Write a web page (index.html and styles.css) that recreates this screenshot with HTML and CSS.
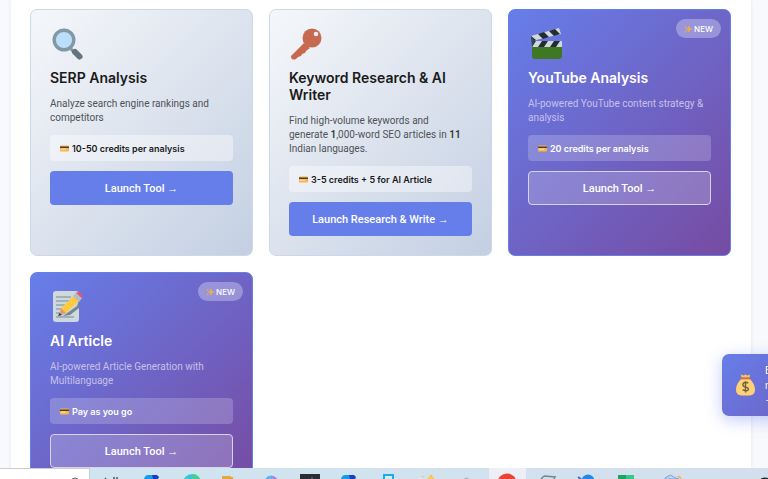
FILE: index.html
```html
<!DOCTYPE html>
<html lang="en">

<head>
    <meta charset="UTF-8">
    <meta name="viewport" content="width=device-width, initial-scale=1.0">
    <title>SEO Tools</title>
    <link rel="stylesheet" href="styles.css">
</head>

<body>
    <svg class="defs" aria-hidden="true">
        <symbol id="card" viewBox="0 0 18 14">
            <rect x="0" y="1" width="18" height="12" rx="1.5" fill="#f5b64c"/>
            <rect x="0" y="3" width="18" height="3" fill="#4b4036"/>
            <rect x="2" y="7.5" width="10" height="2" fill="#fbe0ae"/>
        </symbol>
        <symbol id="sparkles" viewBox="0 0 16 16">
            <path d="M10 2l1.600 4.400L16 8l-4.400 1.600L10 14l-1.600-4.400L4 8l4.400-1.600z" fill="#f3b045" stroke="#f3b045"/>
            <path d="M3 1l.8 2.200L6 4l-2.200.8L3 7l-.8-2.200L0 4l2.200-.8zM3.500 10l.8 2.200 2.200.8-2.200.8-.8 2.200-.8-2.200L.5 13l2.200-.8z" fill="#e8a84f"/>
        </symbol>
    </svg>

    <main class="container">
        <div class="tools-grid">
            <article class="tool-card">
                <svg class="tool-icon" viewBox="0 0 34 34">
                    <path d="M21 20l4 4" stroke="#78909c" stroke-width="3"/>
                    <path d="M25 23l4.500 4.500" stroke="#62747d" stroke-width="6" stroke-linecap="round"/>
                    <circle cx="14" cy="11" r="9.800" fill="#bbdefb" stroke="#8299a5" stroke-width="3.400"/>
                </svg>
                <h3>SERP Analysis</h3>
                <p class="desc">Analyze search engine rankings and competitors</p>
                <div class="credits"><svg><use href="#card"/></svg>10-50 credits per analysis</div>
                <button class="btn">Launch Tool →</button>
            </article>

            <article class="tool-card">
                <svg class="tool-icon" viewBox="0 0 34 34">
                    <path d="M15 14l6 5-4 3-1 2-3 1-1 2-3 1-2 2q-5 2-5-3z" fill="#c6694f"/>
                    <circle cx="23" cy="9" r="9.500" fill="#c6694f"/>
                    <circle cx="27" cy="5" r="2.300" fill="#e9edf4"/>
                </svg>
                <h3>Keyword Research &amp; AI Writer</h3>
                <p class="desc">Find high-volume keywords and generate <b>1</b>,000-word SEO articles in <b>11</b> Indian languages.</p>
                <div class="credits"><svg><use href="#card"/></svg>3-5 credits + 5 for AI Article</div>
                <button class="btn">Launch Research &amp; Write →</button>
            </article>

            <article class="tool-card featured">
                <span class="badge"><svg><use href="#sparkles"/></svg>NEW</span>
                <svg class="tool-icon" viewBox="0 0 34 34">
                    <path d="M4 12h30v7H4z" fill="#cfd8dc"/>
                    <path d="M4 12h4l-4 6zM14 12h6l-4 6h-6zM26 12h6l-4 6h-6z" fill="#252b31"/>
                    <path d="M3 7L31-1l2 6L4 12z" fill="#cfd8dc"/>
                    <path d="M3 7l5 4-4 2zM10 5l6-2 5 5-6 2zM21 2l6-2 5 5-6 2z" fill="#252b31"/>
                    <path d="M3 7l4 5-3 6z" fill="#37474f"/>
                    <path d="M4 18h30v9q0 3-3 3H7q-3 0-3-3z" fill="#3f7825"/>
                </svg>
                <h3>YouTube Analysis</h3>
                <p class="desc">AI-powered YouTube content strategy &amp; analysis</p>
                <div class="credits"><svg><use href="#card"/></svg>20 credits per analysis</div>
                <button class="btn">Launch Tool →</button>
            </article>

            <article class="tool-card featured">
                <span class="badge"><svg><use href="#sparkles"/></svg>NEW</span>
                <svg class="tool-icon" viewBox="0 0 34 34">
                    <rect x="3" y="-1" width="26" height="31" rx="3" fill="#cfd8dc"/>
                    <path d="M6 5h15M6 9h14M6 13h10M6 17h7M6 21h5M6 25h18" stroke="#90a4ae" stroke-width="1.300"/>
                    <path d="M13 24l14-10 2-6v8l-9 7z" fill="#78878e"/>
                    <path d="M11 16L25 3l5 5-14 13-7 3z" fill="#ffca40"/>
                    <path d="M11 16l5 5-7 3z" fill="#d99b83"/>
                    <path d="M9.500 21l2.500 2-4 1z" fill="#30383c"/>
                    <path d="M23 4l3-3 6 5-3 4z" fill="#b0bec5"/>
                    <path d="M26 1q2-2 4 0l2 2q1 1 0 3z" fill="#ee5564"/>
                </svg>
                <h3>AI Article</h3>
                <p class="desc">AI-powered Article Generation with Multilanguage</p>
                <div class="credits"><svg><use href="#card"/></svg>Pay as you go</div>
                <button class="btn">Launch Tool →</button>
            </article>
        </div>
    </main>

    <aside class="toast">
        <svg viewBox="0 0 20 22">
            <path d="M5 0l3 1 2-1 2 1 3-1-1 4H6z" fill="#f5c65d"/>
            <path d="M6 4h8q6 6 6 12 0 6-6 6H6q-6 0-6-6Q0 10 6 4z" fill="#ffd074"/>
            <path d="M5 4h10" stroke="#c86d53" stroke-width="2"/>
            <path d="M13 9q-3-2-5 0t1 4q5 1 4 3t-6 0M10 7v12" stroke="#6b6143" stroke-width="1.500" fill="none"/>
        </svg>
        <p>Earn<br>rewards<br>→</p>
    </aside>

    <footer class="taskbar">
        <div class="search"><svg viewBox="0 0 10 10"><circle cx="5" cy="5" r="4" fill="none" stroke="#666" stroke-width="1"/></svg></div>
        <svg class="apps" viewBox="0 0 679 11" preserveAspectRatio="xMinYMin slice">
            <rect x="399" width="37" height="11" fill="#eceff7"/>
            <path d="M15 11l1-1M24 9v2M27 9v2" stroke="#4b5960" stroke-width="1.500"/>
            <path d="M54 11q1-4 4-4h9v4z" fill="#159bea"/><path d="M62 7h5l2 2-1 2h-5z" fill="#153fc4"/>
            <circle cx="102" cy="15" r="9" fill="#35c5d5"/><path d="M102 6q6 0 8 5h-8z" fill="#45cd96"/>
            <path d="M132 8h9v1h2v2h-11z" fill="#e3a83e"/>
            <circle cx="181" cy="14" r="6.500" fill="#62b2ed"/><path d="M181 8q5 0 6 3h-5z" fill="#a68be6"/>
            <rect x="210" y="6" width="20" height="5" fill="#292e34"/><path d="M221 10h2" stroke="#728089"/>
            <path d="M251 11q1-4 4-4h9v4z" fill="#159bea"/><path d="M259 7h5l2 2-1 2h-5z" fill="#153fc4"/>
            <rect x="294" y="7" width="9" height="7" fill="#d6ecf5" stroke="#18aee2" stroke-width="2"/>
            <path d="M332 8l2 1M338 11l3-4 3 4z" fill="#ffca4b" stroke="#f5c14b"/>
            <path d="M374 11q2-3 5 0z" fill="#a9b4bd"/>
            <circle cx="417" cy="15" r="9.500" fill="#ea4335"/>
            <path d="M454 8l11 1-1 2M451 11l3-3" fill="none" stroke="#78878e" stroke-width="1.500"/>
            <circle cx="498" cy="13" r="6.500" fill="#2388ed"/><path d="M488 9l3 2" stroke="#426fd3" stroke-width="2"/>
            <rect x="528" y="7" width="8" height="4" fill="#1ba366"/><rect x="536" y="7" width="8" height="4" fill="#35c889"/>
            <path d="M575 10l5-3 6 3 3 1h-14z" fill="#b6d4f4" stroke="#86a5d5"/><path d="M588 8l3 2" stroke="#f3b44d" stroke-width="2"/>
            <ellipse cx="675" cy="11" rx="4" ry="1.500" fill="#20262c"/>
        </svg>
    </footer>
</body>

</html>
```
FILE: styles.css
```css
* {
    box-sizing: border-box;
    margin: 0;
    padding: 0;
}

body {
    height: 100vh;
    overflow: hidden;
    background-color: #f7f9fc;
    font-family: Inter, "Liberation Sans", sans-serif;
    color: #1a1a1a;
}

.defs {
    display: none;
}

.container {
    margin: 0 17px 0 11px;
    padding: 9px 20px 20px 19px;
    background-color: #fff;
    box-shadow: 0 0 4px rgba(0, 0, 0, 0.08);
}

.tools-grid {
    display: grid;
    grid-template-columns: repeat(3, 1fr);
    gap: 16px;
}

.tool-card {
    position: relative;
    display: flex;
    flex-direction: column;
    padding: 19px;
    border: 1px solid #cbd8ea;
    border-radius: 7px;
    background: linear-gradient(135deg, #f5f7fa 0%, #c3cfe2 100%);
}

.featured {
    border-color: #667eea;
    background: linear-gradient(135deg, #667eea 0%, #764ba2 100%);
    color: #fff;
}

.tool-icon {
    width: 34px;
    height: 34px;
    margin-bottom: 6px;
    overflow: visible;
}

h3 {
    margin-bottom: 11px;
    font-size: 14px;
    line-height: 17px;
    font-weight: 600;
}

.desc {
    margin-bottom: 10px;
    padding-right: 4px;
    font-family: Roboto, "Liberation Sans", sans-serif;
    font-size: 10px;
    line-height: 14px;
    color: #4f5257;
}

.featured .desc {
    color: #c7c0eb;
}

.desc b {
    font-weight: 600;
    color: #333;
}

.credits {
    display: flex;
    align-items: center;
    gap: 3px;
    height: 26px;
    margin-bottom: 10px;
    padding: 0 10px;
    border-radius: 4px;
    background-color: rgba(255, 255, 255, 0.4);
    font-size: 9px;
    font-weight: 600;
}

.featured .credits {
    background-color: rgba(255, 255, 255, 0.2);
}

.credits svg {
    width: 9px;
    height: 7px;
}

.btn {
    height: 34px;
    border: 0;
    border-radius: 4px;
    background-color: #667eea;
    color: #fff;
    font-family: Roboto, "Liberation Sans", sans-serif;
    font-size: 11px;
    font-weight: 500;
    cursor: pointer;
}

.featured .btn {
    border: 1px solid #d9d2ec;
    background-color: rgba(255, 255, 255, 0.2);
}

.badge {
    position: absolute;
    top: 9px;
    right: 9px;
    display: flex;
    align-items: center;
    gap: 2px;
    height: 19px;
    padding: 0 8px;
    border-radius: 10px;
    background-color: rgba(255, 255, 255, 0.3);
    font-size: 8px;
    font-weight: 500;
}

.badge svg {
    width: 8px;
    height: 8px;
}

.toast {
    position: fixed;
    right: -154px;
    bottom: 63px;
    display: flex;
    align-items: center;
    gap: 10px;
    width: 200px;
    height: 62px;
    padding: 0 14px;
    border-radius: 7px;
    background: linear-gradient(135deg, #667eea 0%, #764ba2 100%);
    box-shadow: 0 4px 16px rgba(102, 126, 234, 0.4);
    color: #fff;
    font-size: 10px;
    line-height: 15px;
}

.toast svg {
    width: 19px;
    height: 22px;
}

.taskbar {
    position: fixed;
    right: 0;
    bottom: 0;
    left: 0;
    display: flex;
    height: 11px;
    overflow: hidden;
    background: linear-gradient(90deg, #cfe6f0, #d3dfec);
}

.search {
    display: flex;
    justify-content: flex-end;
    width: 90px;
    padding: 8px 9px 0 0;
    border-top: 1px solid #ccc;
    border-right: 1px solid #ccc;
    background-color: #fff;
}

.search svg {
    width: 10px;
    height: 10px;
}

.apps {
    flex: 1;
    height: 11px;
}
```
